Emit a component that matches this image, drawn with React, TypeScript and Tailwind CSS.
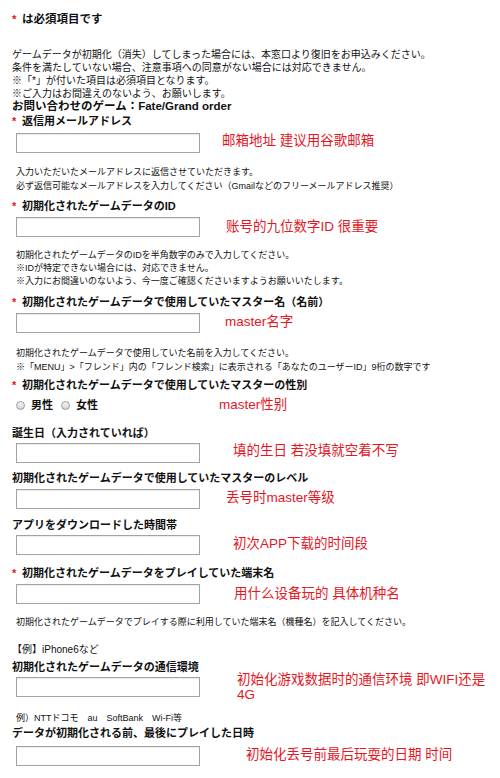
const jp = { fontFamily: '"Liberation Sans", "Noto Sans CJK JP", sans-serif' };
const sc = { fontFamily: '"Liberation Sans", "Noto Sans CJK SC", sans-serif' };

function Star() {
  return <span className="inline-block w-[10px] text-[#e0141c] font-bold">*</span>;
}

function Label({ text, required, className = "" }: { text: string; required?: boolean; className?: string }) {
  return (
    <div className={`text-[11px] leading-[14px] font-bold text-[#111] whitespace-nowrap ${className}`}>
      {required && <Star />}
      {text}
    </div>
  );
}

function Field({ note, noteClass = "", className = "" }: { note: React.ReactNode; noteClass?: string; className?: string }) {
  return (
    <div className={`flex items-center h-[20px] ${className}`}>
      <div className="ml-[4px] w-[184px] h-[20px] shrink-0 border border-[#a3a3a3] bg-white shadow-[inset_0_1px_1px_rgba(0,0,0,0.08)]" />
      <div className={`text-[13.5px] leading-[15px] text-[#e5161f] ${noteClass}`} style={sc}>
        {note}
      </div>
    </div>
  );
}

function Help({ lines, className = "", leading = "leading-[14px]" }: { lines: string[]; className?: string; leading?: string }) {
  return (
    <div className={`pl-[4px] text-[9px] ${leading} text-[#111] whitespace-nowrap ${className}`}>
      {lines.map((l) => (
        <div key={l}>{l}</div>
      ))}
    </div>
  );
}

function Radio({ label }: { label: string }) {
  return (
    <span className="inline-flex items-center">
      <span className="w-[9px] h-[9px] rounded-full border border-[#9a9a9a] bg-gradient-to-b from-[#f4f4f4] to-[#d6d6d6]" />
      <span className="ml-[6px] text-[11px] font-bold">{label}</span>
    </span>
  );
}

export default function App() {
  return (
    <div className="w-[500px] h-[778px] bg-white overflow-hidden pl-[12px] pt-[11px] text-[#111]" style={jp}>
      <div className="text-[11.5px] leading-[16px] font-bold">
        <Star />は必須項目です
      </div>

      <div className="mt-[21px] text-[10px] leading-[13px] whitespace-nowrap">
        <div>ゲームデータが初期化（消失）してしまった場合には、本窓口より復旧をお申込みください。</div>
        <div>条件を満たしていない場合、注意事項への同意がない場合には対応できません。</div>
        <div>※「*」が付いた項目は必須項目となります。</div>
        <div>※ご入力はお間違えのないよう、お願いします。</div>
        <div className="font-bold text-[11.5px]">お問い合わせのゲーム：Fate/Grand order</div>
      </div>

      <Label required text="返信用メールアドレス" className="mt-[1px]" />
      <Field className="mt-[5px]" noteClass="ml-[22px] -mt-[5px]" note="邮箱地址 建议用谷歌邮箱" />
      <Help
        className="mt-[12px]"
        lines={[
          "入力いただいたメールアドレスに返信させていただきます。",
          "必ず返信可能なメールアドレスを入力してください（Gmailなどのフリーメールアドレス推奨）",
        ]}
      />

      <Label required text="初期化されたゲームデータのID" className="mt-[6px]" />
      <Field className="mt-[4px]" noteClass="ml-[26px] -mt-[2px]" note="账号的九位数字ID 很重要" />
      <Help
        className="mt-[12px]"
        leading="leading-[13px]"
        lines={[
          "初期化されたゲームデータのIDを半角数字のみで入力してください。",
          "※IDが特定できない場合には、対応できません。",
          "※入力にお間違いのないよう、今一度ご確認くださいますようお願いいたします。",
        ]}
      />

      <Label required text="初期化されたゲームデータで使用していたマスター名（名前）" className="mt-[7px]" />
      <Field className="mt-[4px]" noteClass="ml-[25px] -mt-[3px]" note="master名字" />
      <Help
        className="mt-[13px]"
        lines={[
          "初期化されたゲームデータで使用していた名前を入力してください。",
          "※「MENU」>「フレンド」内の「フレンド検索」に表示される「あなたのユーザーID」9桁の数字です",
        ]}
      />

      <Label required text="初期化されたゲームデータで使用していたマスターの性別" className="mt-[4px]" />
      <div className="mt-[6px] h-[14px] flex items-center pl-[4px]">
        <Radio label="男性" />
        <span className="ml-[8px]">
          <Radio label="女性" />
        </span>
        <span className="ml-[121px] text-[13.5px] text-[#e5161f]" style={sc}>
          master性别
        </span>
      </div>

      <Label text="誕生日（入力されていれば）" className="mt-[14px]" />
      <Field className="mt-[3px]" noteClass="ml-[33px] -mt-[5px]" note="填的生日 若没填就空着不写" />

      <Label text="初期化されたゲームデータで使用していたマスターのレベル" className="mt-[8px]" />
      <Field className="mt-[4px]" noteClass="ml-[26px] -mt-[4px]" note="丢号时master等级" />

      <Label text="アプリをダウンロードした時間帯" className="mt-[9px]" />
      <Field className="mt-[3px]" noteClass="ml-[33px] -mt-[4px]" note="初次APP下载的时间段" />

      <Label required text="初期化されたゲームデータをプレイしていた端末名" className="mt-[11px]" />
      <Field className="mt-[4px]" noteClass="ml-[34px] -mt-[2px]" note="用什么设备玩的 具体机种名" />
      <Help
        className="mt-[11px]"
        lines={["初期化されたゲームデータでプレイする際に利用していた端末名（機種名）を記入してください。"]}
      />

      <div className="mt-[14px] text-[10px] leading-[14px]">【例】iPhone6など</div>

      <Label text="初期化されたゲームデータの通信環境" className="mt-[3px]" />
      <Field
        className="mt-[3px]"
        noteClass="ml-[37px] w-[250px] -mt-[1px]"
        note={
          <>
            初始化游戏数据时的通信环境 即WIFI还是
            <br />
            4G
          </>
        }
      />

      <Help className="mt-[14px]" lines={["例）NTTドコモ　au　SoftBank　Wi-Fi等"]} />

      <Label text="データが初期化される前、最後にプレイした日時" className="mt-[1px]" />
      <Field className="mt-[6px]" noteClass="ml-[46px] -mt-[3px]" note="初始化丢号前最后玩耍的日期 时间" />
    </div>
  );
}
